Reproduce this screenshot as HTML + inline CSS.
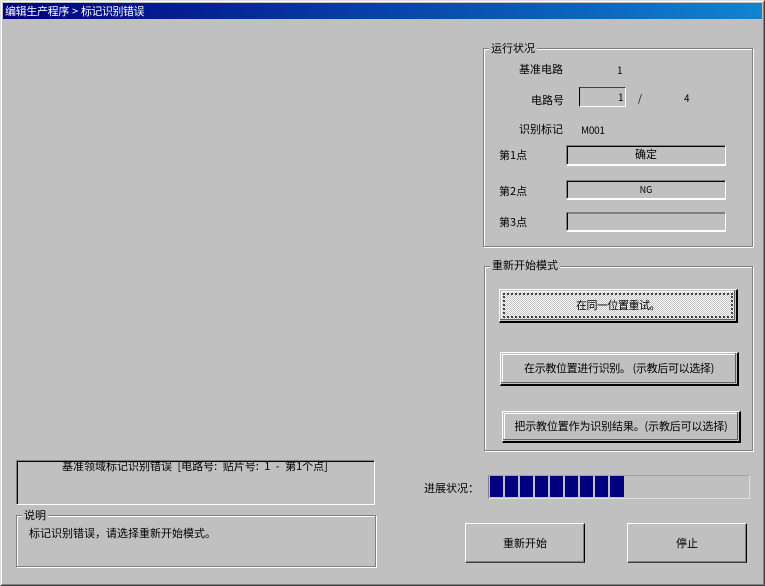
<!DOCTYPE html>
<html><head><meta charset="utf-8"><style>
*{box-sizing:border-box}
html,body{margin:0;padding:0}
body{width:765px;height:586px;overflow:hidden;background:#c0c0c0;position:relative;font:11px/12px "WenQuanYi Zen Hei","Noto Sans CJK SC",sans-serif;color:#000}
.a{position:absolute}
.t{position:absolute;white-space:nowrap;line-height:12px}
.title{left:3px;top:3px;width:759px;height:16px;background:linear-gradient(90deg,#000080,#1084d0)}
.grp{position:absolute;border:1px solid #808080;box-shadow:1px 1px 0 #fff,inset 1px 1px 0 #fff}
.leg{position:absolute;background:#c0c0c0;padding:0 2px;white-space:nowrap;line-height:12px}
.sunk{position:absolute;border-style:solid;border-width:1px 1px 2px 1px;border-color:#808080 #fff #fff #808080;text-align:center;box-shadow:inset 1px 1px 0 #000}
.btn{position:absolute;background:#c0c0c0;border-style:solid;border-width:1px 2px 2px 1px;border-color:#fff #000 #000 #fff;box-shadow:inset -1px -1px 0 #c0c0c0,inset -2px -2px 0 #606060,inset 1px 1px 0 #c0c0c0,inset 2px 2px 0 #fff;text-align:center;white-space:nowrap}
.seg{position:absolute;top:476px;width:13px;height:21px;background:#000080}
.big{position:absolute;background:#c0c0c0;border-style:solid;border-width:1px;border-color:#fff #000 #404040 #fff;box-shadow:inset -1px -1px 0 #808080;text-align:center;white-space:nowrap}
</style></head><body>
<div class="a" style="left:0;top:0;width:765px;height:586px;border-left:1px solid #dfdfdf;border-top:1px solid #dfdfdf;border-right:1px solid #404040;border-bottom:1px solid #404040"></div>
<div class="a" style="left:1px;top:1px;width:763px;height:584px;border-left:1px solid #fff;border-top:1px solid #fff;border-right:1px solid #808080;border-bottom:1px solid #808080"></div>
<div class="a title"></div>
<div class="t" style="left:5px;top:5px;color:#fff;letter-spacing:-.33px">编辑生产程序</div>
<div class="t" style="left:72px;top:5px;color:#fff">&gt;</div>
<div class="t" style="left:81px;top:5px;color:#fff;letter-spacing:-.5px">标记识别错误</div>

<div class="grp" style="left:483px;top:48px;width:270px;height:199px"></div>
<div class="leg" style="left:489px;top:42px">运行状况</div>
<div class="t" style="left:519px;top:63px">基准电路</div>
<div class="t" style="left:617px;top:64px;font-size:10px">1</div>
<div class="t" style="left:531px;top:94px">电路号</div>
<div class="a" style="left:579px;top:87px;width:47px;height:20px;border-top:1px solid #404040;border-left:1px solid #000;border-right:1px solid #fff;border-bottom:1px solid #fff"></div>
<div class="t" style="left:618px;top:91px;font-size:10px">1</div>
<div class="t" style="left:638px;top:92px;font-size:10px">/</div>
<div class="t" style="left:684px;top:92px;font-size:10px">4</div>
<div class="t" style="left:519px;top:123px">识别标记</div>
<div class="t" style="left:581px;top:124px;font-size:10px;letter-spacing:-.3px">M001</div>

<div class="t" style="left:499px;top:149px">第1点</div>
<div class="sunk" style="left:566px;top:145px;width:160px;height:21px;line-height:17px">确定</div>
<div class="t" style="left:499px;top:185px">第2点</div>
<div class="sunk" style="left:566px;top:180px;width:160px;height:20px;line-height:17px;font-size:9px">NG</div>
<div class="t" style="left:499px;top:216px">第3点</div>
<div class="sunk" style="left:566px;top:212px;width:160px;height:20px;box-shadow:inset 1px 0 0 #000,inset 0 1px 0 #808080"></div>

<div class="grp" style="left:484px;top:266px;width:269px;height:185px"></div>
<div class="leg" style="left:490px;top:259px">重新开始模式</div>

<div class="btn" style="left:499px;top:289px;width:239px;height:34px;line-height:30px;background:repeating-conic-gradient(#fff 0 25%,#c0c0c0 0 50%) 0 0/2px 2px">
<span class="a" style="left:3px;top:3px;right:3px;bottom:3px;border:2px dotted #404040"></span><span style="position:relative;letter-spacing:-.5px">在同一位置重试。</span></div>
<div class="btn" style="left:500px;top:352px;width:239px;height:34px;line-height:31px;letter-spacing:-.35px">在示教位置进行识别。 (示教后可以选择)</div>
<div class="btn" style="left:502px;top:411px;width:239px;height:32px;line-height:29px;letter-spacing:-.15px">把示教位置作为识别结果。(示教后可以选择)</div>

<div class="a" style="left:16px;top:460px;width:359px;height:45px;border-style:solid;border-width:1px;border-color:#808080 #fff #fff #808080;box-shadow:inset 1px 1px 0 #000"></div>
<div class="t" style="left:62px;top:460px;word-spacing:3px">基准领域标记识别错误 [电路号: 贴片号: 1 - 第1个点]</div>

<div class="grp" style="left:16px;top:515px;width:360px;height:52px"></div>
<div class="leg" style="left:22px;top:509px">说明</div>
<div class="t" style="left:29px;top:527px">标记识别错误，请选择重新开始模式。</div>

<div class="t" style="left:424px;top:482px">进展状况：</div>
<div class="a" style="left:488px;top:475px;width:262px;height:24px;border-top:1px solid #a0a0a0;border-left:1px solid #808080;border-right:1px solid #dfdfdf;border-bottom:1px solid #dfdfdf"></div>
<div class="seg" style="left:490px"></div>
<div class="seg" style="left:505px"></div>
<div class="seg" style="left:520px"></div>
<div class="seg" style="left:535px"></div>
<div class="seg" style="left:550px"></div>
<div class="seg" style="left:565px"></div>
<div class="seg" style="left:580px"></div>
<div class="seg" style="left:595px"></div>
<div class="seg" style="left:610px;width:14px"></div>

<div class="big" style="left:465px;top:523px;width:120px;height:40px;line-height:38px">重新开始</div>
<div class="big" style="left:627px;top:523px;width:120px;height:40px;line-height:38px">停止</div>
</body></html>
